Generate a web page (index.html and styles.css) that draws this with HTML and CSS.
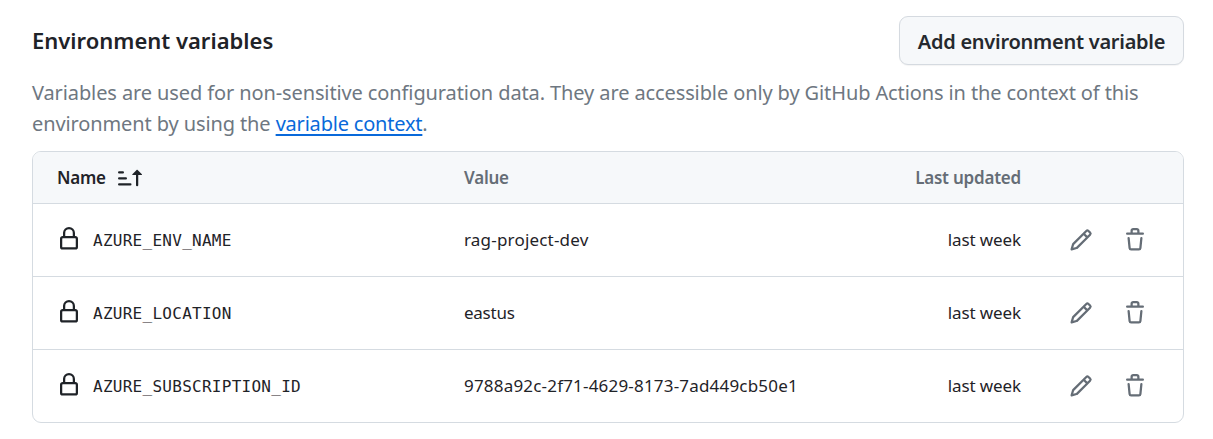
FILE: index.html
```html
<!DOCTYPE html>
<html lang="en">
<head>
<meta charset="utf-8">
<title>Environment variables</title>
<link rel="stylesheet" href="styles.css">
</head>
<body>
<svg class="sprite" aria-hidden="true">
  <symbol id="lock" viewBox="0 0 16 16"><path d="M4 4a4 4 0 0 1 8 0v2h.25c.966 0 1.75.784 1.75 1.75v5.5A1.75 1.75 0 0 1 12.25 15h-8.5A1.75 1.75 0 0 1 2 13.25v-5.5C2 6.784 2.784 6 3.75 6H4Zm8.25 3.5h-8.5a.25.25 0 0 0-.25.25v5.5c0 .138.112.25.25.25h8.5a.25.25 0 0 0 .25-.25v-5.5a.25.25 0 0 0-.25-.25ZM10.5 6V4a2.5 2.5 0 1 0-5 0v2Z"/></symbol>
  <symbol id="pencil" viewBox="0 0 16 16"><path d="M11.013 1.427a1.75 1.75 0 0 1 2.474 0l1.086 1.086a1.75 1.75 0 0 1 0 2.474l-8.61 8.61c-.21.21-.47.364-.756.445l-3.251.93a.75.75 0 0 1-.927-.928l.929-3.25c.081-.286.235-.547.445-.758l8.61-8.61Zm.176 4.823L9.75 4.81l-6.286 6.287a.253.253 0 0 0-.064.108l-.558 1.953 1.953-.558a.253.253 0 0 0 .108-.064Zm1.238-3.763a.25.25 0 0 0-.354 0L10.811 3.75l1.439 1.44 1.263-1.263a.25.25 0 0 0 0-.354Z"/></symbol>
  <symbol id="trash" viewBox="0 0 16 16"><path d="M11 1.75V3h2.25a.75.75 0 0 1 0 1.5H2.75a.75.75 0 0 1 0-1.5H5V1.75C5 .784 5.784 0 6.75 0h2.5C10.216 0 11 .784 11 1.75ZM4.496 6.675l.66 6.6a.25.25 0 0 0 .249.225h5.19a.25.25 0 0 0 .249-.225l.66-6.6a.75.75 0 0 1 1.492.149l-.66 6.6A1.748 1.748 0 0 1 10.595 15h-5.19a1.75 1.75 0 0 1-1.741-1.575l-.66-6.6a.75.75 0 1 1 1.492-.15ZM6.5 1.75V3h3V1.75a.25.25 0 0 0-.25-.25h-2.5a.25.25 0 0 0-.25.25Z"/></symbol>
  <symbol id="sort" viewBox="0 0 16 16"><path d="m12.927 2.573 3 3A.25.25 0 0 1 15.75 6H13.5v6.75a.75.75 0 0 1-1.5 0V6H9.75a.25.25 0 0 1-.177-.427l3-3a.25.25 0 0 1 .354 0ZM0 12.25a.75.75 0 0 1 .75-.75h7.5a.75.75 0 0 1 0 1.5H.75a.75.75 0 0 1-.75-.75Zm0-4a.75.75 0 0 1 .75-.75h4.5a.75.75 0 0 1 0 1.5H.75A.75.75 0 0 1 0 8.25Zm0-4a.75.75 0 0 1 .75-.75h2.5a.75.75 0 0 1 0 1.5H.75A.75.75 0 0 1 0 4.25Z"/></symbol>
</svg>
<main class="panel">
  <header class="heading">
    <h2 class="title">Environment variables</h2>
    <button class="add" type="button">Add environment variable</button>
  </header>
  <p class="intro">Variables are used for non-sensitive configuration data. They are accessible only by GitHub Actions in the context of this<br>environment by using the <a class="link" href="#">variable context</a>.</p>
  <section class="table">
    <div class="row head">
      <div class="sortable">Name<svg class="icon"><use href="#sort"/></svg></div>
      <div>Value</div>
      <div class="updated">Last updated</div>
      <div></div>
    </div>
    <div class="row">
      <div class="name"><svg class="icon lock"><use href="#lock"/></svg><code class="code">AZURE_ENV_NAME</code></div>
      <div class="value">rag-project-dev</div>
      <div class="updated when">last week</div>
      <div class="actions"><svg class="icon"><use href="#pencil"/></svg><svg class="icon"><use href="#trash"/></svg></div>
    </div>
    <div class="row">
      <div class="name"><svg class="icon lock"><use href="#lock"/></svg><code class="code">AZURE_LOCATION</code></div>
      <div class="value tight">eastus</div>
      <div class="updated when">last week</div>
      <div class="actions"><svg class="icon"><use href="#pencil"/></svg><svg class="icon"><use href="#trash"/></svg></div>
    </div>
    <div class="row">
      <div class="name"><svg class="icon lock"><use href="#lock"/></svg><code class="code">AZURE_SUBSCRIPTION_ID</code></div>
      <div class="value">9788a92c-2f71-4629-8173-7ad449cb50e1</div>
      <div class="updated when">last week</div>
      <div class="actions"><svg class="icon"><use href="#pencil"/></svg><svg class="icon"><use href="#trash"/></svg></div>
    </div>
  </section>
</main>
</body>
</html>
```
FILE: styles.css
```css
* { box-sizing: border-box; }
body {
  margin: 0;
  background: #fff;
  color: #1f2328;
  font-family: "Noto Sans", "Open Sans", sans-serif;
  font-size: 17px;
}
.sprite { display: none; }
.icon { width: 24px; height: 24px; fill: currentColor; flex: none; display: block; }
.lock { margin-bottom: 3px; }
.panel { width: 1152px; margin-left: 32px; padding-top: 16px; }
.heading { display: flex; justify-content: space-between; align-items: center; height: 49px; }
.title { margin: 0; padding-bottom: 2px; font-size: 22px; font-weight: 600; white-space: nowrap; }
.add {
  width: 285px;
  height: 49px;
  padding: 2px 0 0;
  border: 1px solid #d5dae0;
  border-radius: 9px;
  background: #f6f8fa;
  box-shadow: 0 1px 1px rgba(31, 35, 40, 0.05);
  color: #25292e;
  font: 600 20px "Noto Sans", sans-serif;
  letter-spacing: -0.26px;
  white-space: nowrap;
}
.intro {
  margin: 12px 0 0;
  height: 74px;
  color: #6e7781;
  font-size: 20px;
  line-height: 31px;
  letter-spacing: -0.11px;
  white-space: nowrap;
}
.link { color: #0969da; letter-spacing: -0.2px; text-decoration: underline; text-underline-offset: 3px; text-decoration-thickness: 2px; }
.table { border: 1px solid #d5dbe1; border-radius: 9px; overflow: hidden; }
.row {
  display: grid;
  grid-template-columns: 407px 400px 157px 1fr;
  align-items: center;
  height: 73px;
  padding: 0 24px;
  border-top: 1px solid #d5dbe1;
  white-space: nowrap;
}
.head { height: 51px; border-top: 0; background: #f6f8fa; color: #656d76; font-weight: 600; letter-spacing: -0.22px; }
.sortable { display: flex; align-items: center; gap: 12px; color: #1f2328; }
.name { display: flex; align-items: center; gap: 12px; }
.code { font-family: "DejaVu Sans Mono", monospace; font-size: 16px; letter-spacing: 0.27px; }
.value { padding-bottom: 2px; letter-spacing: 0.19px; }
.tight { letter-spacing: -0.25px; }
.updated { text-align: right; }
.when { padding-bottom: 2px; letter-spacing: -0.1px; }
.actions { display: flex; gap: 30px; padding-left: 48px; color: #656d76; }
```
